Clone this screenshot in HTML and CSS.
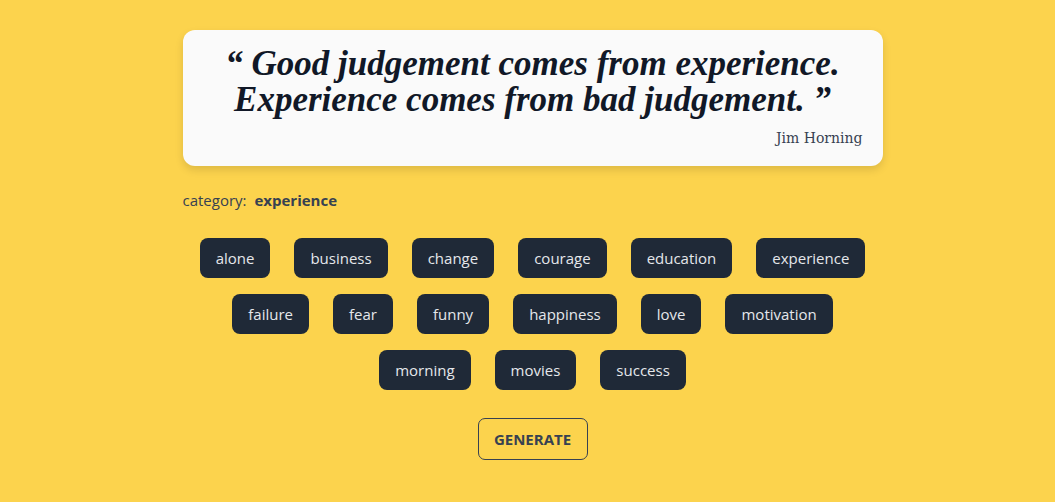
FILE: index.html
```html
<!DOCTYPE html>
<html>
<head>
<meta charset="utf-8">
<link rel="stylesheet" href="styles.css">
</head>
<body>
<main class="page">
  <section class="card">
    <p class="quote">&#8220; Good judgement comes from experience. Experience comes from bad judgement. &#8221;</p>
    <p class="author">Jim Horning</p>
  </section>
  <p class="category">category: <strong>experience</strong></p>
  <div class="tags">
    <button class="tag">alone</button>
    <button class="tag">business</button>
    <button class="tag">change</button>
    <button class="tag">courage</button>
    <button class="tag">education</button>
    <button class="tag">experience</button>
    <button class="tag">failure</button>
    <button class="tag">fear</button>
    <button class="tag">funny</button>
    <button class="tag">happiness</button>
    <button class="tag">love</button>
    <button class="tag">motivation</button>
    <button class="tag">morning</button>
    <button class="tag">movies</button>
    <button class="tag">success</button>
  </div>
  <div class="actions">
    <button class="generate">GENERATE</button>
  </div>
</main>
</body>
</html>
```

FILE: styles.css
```css
* { box-sizing: border-box; }
html, body {
  margin: 0;
  padding: 0;
  background: #fcd34d;
  font-family: "Open Sans", "Noto Sans", sans-serif;
  color: #374151;
}
body {
  padding-left: 10px;
}
.page {
  width: 700px;
  margin: 0 auto;
  padding-top: 30px;
}
.card {
  background: #fafafa;
  border-radius: 12px;
  box-shadow: 0 4px 8px rgba(0,0,0,0.12);
  padding: 16px 20px 18px;
}
.quote {
  margin: 0;
  text-align: center;
  font-family: "Liberation Serif", "DejaVu Serif", serif;
  font-style: italic;
  font-weight: 700;
  font-size: 35px;
  line-height: 36px;
  color: #111827;
  padding: 0 14px;
}
.author {
  margin: 10px 0 0;
  text-align: right;
  font-family: "DejaVu Serif", serif;
  font-size: 14px;
  line-height: 20px;
  color: #374151;
}
.category {
  margin: 24px 0 0;
  font-size: 15px;
  line-height: 20px;
  color: #374151;
}
.category strong {
  font-weight: 700;
  margin-left: 4px;
}
.tags {
  display: flex;
  flex-wrap: wrap;
  justify-content: center;
  gap: 16px 24px;
  margin: 28px 5px 0;
}
.tag {
  height: 40px;
  padding: 0 16px;
  border: none;
  border-radius: 8px;
  background: #1f2937;
  color: #e5e7eb;
  font-family: "Open Sans", "Noto Sans", sans-serif;
  font-size: 15px;
}
.actions {
  display: flex;
  justify-content: center;
  margin-top: 28px;
}
.generate {
  width: 110px;
  height: 42px;
  background: transparent;
  border: 1px solid #374151;
  border-radius: 7px;
  color: #374151;
  font-family: "Open Sans", "Noto Sans", sans-serif;
  font-weight: 700;
  font-size: 15px;
}
```
